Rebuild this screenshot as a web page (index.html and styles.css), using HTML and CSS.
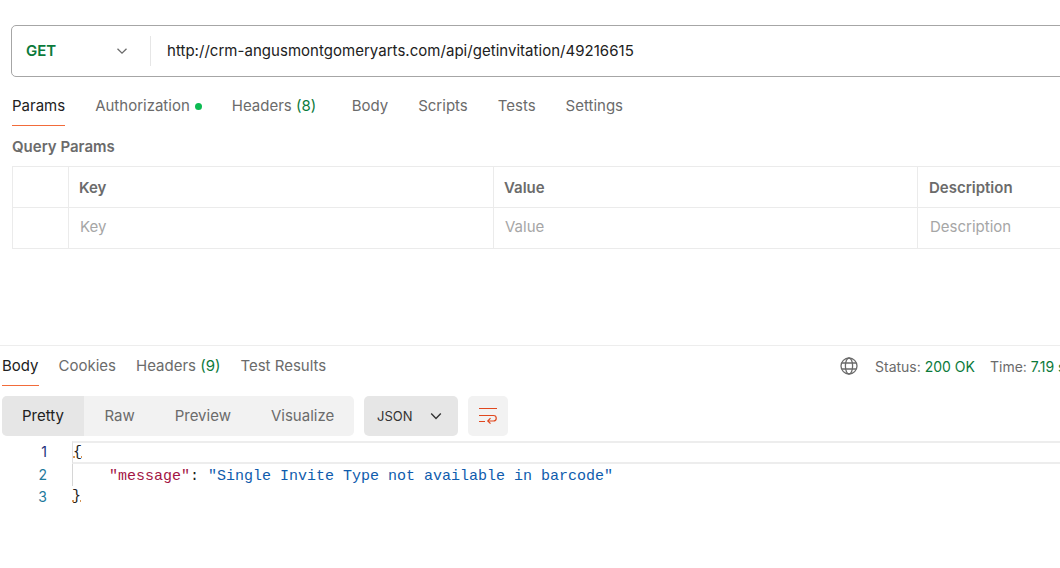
FILE: index.html
```html
<!DOCTYPE html>
<html lang="en">
<head>
    <meta charset="UTF-8">
    <title>Request</title>
    <link rel="stylesheet" href="styles.css">
</head>
<body>
    <section class="request">
        <div class="url-bar">
            <div class="method">
                <span class="method-name">GET</span>
                <svg class="chevron" width="14" height="14" viewBox="0 0 14 14"><path d="M2.5 4.8 7 9.2l4.5-4.4" fill="none" stroke="#6b6b6b" stroke-width="1.3"/></svg>
            </div>
            <div class="url">http://crm-angusmontgomeryarts.com/api/getinvitation/49216615</div>
        </div>

        <nav class="tabs req-tabs">
            <a class="tab active">Params</a>
            <a class="tab">Authorization<i class="dot"></i></a>
            <a class="tab tab-headers">Headers <span class="count">(8)</span></a>
            <a class="tab">Body</a>
            <a class="tab">Scripts</a>
            <a class="tab">Tests</a>
            <a class="tab">Settings</a>
        </nav>

        <h2 class="section-title">Query Params</h2>
        <div class="params-table">
            <div class="cell check"></div>
            <div class="cell head">Key</div>
            <div class="cell head">Value</div>
            <div class="cell head desc">Description</div>
            <div class="cell check"></div>
            <div class="cell hint">Key</div>
            <div class="cell hint">Value</div>
            <div class="cell hint desc">Description</div>
        </div>
    </section>

    <section class="response">
        <div class="res-header">
            <nav class="tabs res-tabs">
                <a class="tab active">Body</a>
                <a class="tab">Cookies</a>
                <a class="tab">Headers <span class="count">(9)</span></a>
                <a class="tab">Test Results</a>
            </nav>
            <div class="res-meta">
                <svg class="globe" width="18" height="18" viewBox="0 0 18 18" fill="none" stroke="#6b6b6b" stroke-width="1.3">
                    <circle cx="9" cy="9" r="8"/>
                    <ellipse cx="9" cy="9" rx="3.6" ry="8"/>
                    <path d="M1.8 6h14.4M1.8 12h14.4"/>
                </svg>
                <span class="meta-item">Status: <b>200 OK</b></span>
                <span class="meta-item">Time: <b>7.19 s</b></span>
            </div>
        </div>

        <div class="toolbar">
            <div class="format-tabs">
                <a class="format active">Pretty</a>
                <a class="format">Raw</a>
                <a class="format">Preview</a>
                <a class="format">Visualize</a>
            </div>
            <div class="lang">JSON
                <svg width="14" height="14" viewBox="0 0 14 14"><path d="M2.2 4.6 7 9.4l4.8-4.8" fill="none" stroke="#333" stroke-width="1.4"/></svg>
            </div>
            <div class="wrap-btn">
                <svg width="20" height="18" viewBox="0 0 20 18" fill="none" stroke="#e0481f" stroke-width="1.2">
                    <path d="M1 1.5h18M1 8.5h14.5a2.75 2.75 0 0 1 0 5.5H10M1 14.5h6"/>
                    <path d="M12.5 11.2 9.8 14l2.7 2.6"/>
                </svg>
            </div>
        </div>

        <div class="code">
            <div class="line current"><span class="num">1</span><span class="src"><span class="brace">{</span></span></div>
            <div class="line"><span class="num">2</span><span class="src guide">    <span class="key">"message"</span>: <span class="str">"Single Invite Type not available in barcode"</span></span></div>
            <div class="line"><span class="num">3</span><span class="src"><span class="brace">}</span></span></div>
        </div>
    </section>
</body>
</html>
```

FILE: styles.css
```css
* {
    margin: 0;
    padding: 0;
    box-sizing: border-box;
}

html,
body {
    height: 100%;
    overflow: hidden;
}

body {
    width: 1060px;
    background: #fff;
    color: #212121;
    font-family: Inter, "Liberation Sans", sans-serif;
    font-size: 15px;
}

.request {
    height: 345px;
    padding: 25px 0 0 12px;
}

.url-bar {
    display: flex;
    align-items: center;
    width: 1060px;
    height: 52px;
    margin-left: -1px;
    border: 1px solid #a6a6a6;
    border-radius: 5px;
}

.method {
    display: flex;
    align-items: center;
    justify-content: space-between;
    width: 139px;
    height: 30px;
    padding: 0 21px 0 14px;
    border-right: 1px solid #e6e6e6;
}

.method-name {
    padding-bottom: 1px;
    color: #0b7a3b;
    font-weight: 600;
}

.url {
    padding: 0 0 1px 16px;
    letter-spacing: 0.03px;
}

.tabs {
    display: flex;
}

.tab {
    color: #6b6b6b;
    white-space: nowrap;
}

.tab.active {
    color: #212121;
    border-bottom: 1px solid #f26b3a;
}

.req-tabs {
    gap: 30px;
    height: 49px;
    padding-top: 19px;
}

.tab-headers {
    margin-right: 5.5px;
}

.dot {
    display: inline-block;
    width: 7px;
    height: 7px;
    margin-left: 5px;
    border-radius: 50%;
    background: #0cbb52;
    vertical-align: 1px;
}

.count {
    color: #0b7a3b;
}

.section-title {
    margin-top: 12px;
    color: #6b6b6b;
    font-size: 15px;
    font-weight: 600;
    line-height: 17px;
}

.params-table {
    display: grid;
    grid-template-columns: 56px 425px 424px 300px;
    grid-auto-rows: 41px;
    width: 1060px;
    margin-top: 11px;
    border-top: 1px solid #ebebeb;
    border-left: 1px solid #ebebeb;
}

.cell {
    display: flex;
    align-items: center;
    padding-left: 10px;
    border-right: 1px solid #ebebeb;
    border-bottom: 1px solid #ebebeb;
}

.head {
    color: #6b6b6b;
    font-weight: 600;
}

.hint {
    padding: 0 0 3px 11px;
    color: #a6a6a6;
}

.head.desc {
    padding-left: 11px;
}

.hint.desc {
    padding-left: 12px;
}

.response {
    border-top: 1px solid #ededed;
}

.res-header {
    display: flex;
    justify-content: space-between;
    height: 40px;
}

.res-tabs {
    gap: 20px;
    padding: 10px 0 0 2px;
}

.res-tabs .tab.active {
    padding-bottom: 10px;
}

.res-meta {
    display: flex;
    align-items: center;
    gap: 15px;
    width: 220px;
    flex-shrink: 0;
    white-space: nowrap;
    color: #6b6b6b;
    font-size: 14px;
    overflow: hidden;
}

.res-meta b {
    color: #0b7a3b;
    font-weight: 400;
}

.globe {
    flex-shrink: 0;
    margin-right: 2px;
}

.toolbar {
    display: flex;
    gap: 10px;
    margin: 10px 0 0 2px;
}

.format-tabs {
    display: flex;
    width: 352px;
    height: 40px;
    border-radius: 5px;
    background: #f2f2f2;
    overflow: hidden;
}

.format {
    display: flex;
    align-items: center;
    padding: 0 20px 1px;
    color: #6b6b6b;
}

.format.active {
    padding: 0 20.5px 1px 20px;
    background: #e6e6e6;
    color: #212121;
}

.lang {
    display: flex;
    align-items: center;
    justify-content: space-between;
    width: 94px;
    height: 40px;
    padding: 0 15px 0 13px;
    border-radius: 5px;
    background: #e6e6e6;
    color: #333;
    font-size: 13px;
}

.wrap-btn {
    display: flex;
    align-items: center;
    justify-content: center;
    width: 40px;
    height: 40px;
    border-radius: 5px;
    background: #f2f2f2;
}

.code {
    margin-top: 5px;
    font-family: "Liberation Mono", monospace;
    font-size: 15px;
    line-height: 22.5px;
}

.line {
    display: flex;
    height: 22.5px;
}

.num {
    width: 72px;
    padding-right: 25px;
    color: #1f7a9c;
    font-family: Inter, sans-serif;
    font-size: 14px;
    text-align: right;
}

.line:first-child .num {
    color: #1c2f7a;
}

.src {
    flex: 1;
    white-space: pre;
}

.line.current .src {
    border-top: 2px solid #ededed;
    border-bottom: 2px solid #ededed;
    border-left: 1px solid #e0e0e0;
    line-height: 19px;
}

.guide {
    padding-top: 2px;
    border-left: 1px solid #d6d6d6;
}

.brace {
    color: #212121;
    text-decoration: underline dotted #c9731f;
}

.key {
    color: #a31545;
}

.str {
    color: #0f5cad;
}
```
